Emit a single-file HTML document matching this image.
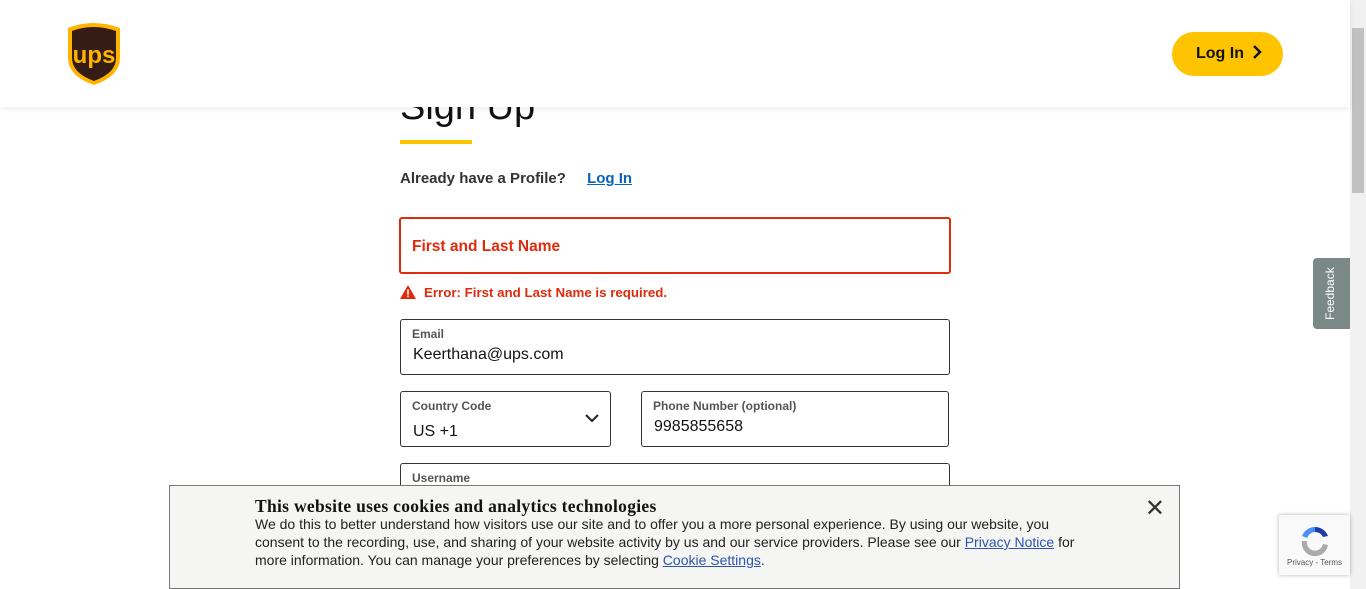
<!DOCTYPE html>
<html><head><meta charset="utf-8"><style>
*{box-sizing:border-box;margin:0;padding:0}
body{width:1366px;height:589px;overflow:hidden;background:#fff;font-family:"Liberation Sans",sans-serif;position:relative}
.hdr{position:absolute;left:0;top:0;width:1350px;height:107px;background:#fff;box-shadow:0 2px 6px rgba(0,0,0,.08);z-index:5}
.sb{position:absolute;right:0;top:0;width:16px;height:589px;background:#f1f1f1}
.thumb{position:absolute;right:2px;top:28px;width:12px;height:165px;background:#c1c1c1}
.login{position:absolute;left:1172px;top:32px;width:111px;height:44px;border-radius:22px;background:#ffc400;font-weight:bold;font-size:16px;color:#121212;line-height:44px;padding-left:24px}
.t{position:absolute;left:400px;top:86px;font-size:38px;color:#121212}
.ul{position:absolute;left:400px;top:140px;width:72px;height:4px;background:#ffc400}
.ah{position:absolute;left:400px;top:170px;font-size:15px;font-weight:bold;color:#333}
.ah a{color:#0662bb;margin-left:17px;text-decoration:underline}
.f{position:absolute;border:1px solid #333;border-radius:3px;background:#fff}
.lab{position:absolute;left:11px;top:7px;font-size:12px;color:#555;font-weight:bold}
.val{position:absolute;left:12px;top:26px;font-size:16px;color:#121212}
.err{position:absolute;left:400px;top:285px;font-size:13.3px;font-weight:bold;color:#df2a0d}
.cb{position:absolute;left:169px;top:485px;width:1011px;height:104px;background:#f5f5f3;border:1px solid #777;z-index:6}
.cb h3{position:absolute;left:85px;top:10px;font-family:"Liberation Serif",serif;font-size:17.5px;letter-spacing:.3px;color:#121212}
.cb p{position:absolute;left:85px;top:29px;width:820px;font-size:14px;line-height:18px;color:#222}
.cb a{color:#2b55b0;text-decoration:underline}
.x{position:absolute;right:14px;top:8px;font-size:24px;color:#333}
.fb{position:absolute;left:1313px;top:258px;width:37px;height:71px;background:#7b8986;border-radius:4px 0 0 4px;z-index:3}
.fb span{position:absolute;left:10px;top:62px;transform:rotate(-90deg);transform-origin:0 0;color:#fff;font-size:12px}
.rc{position:absolute;left:1279px;top:515px;width:71px;height:60px;background:#f9f9f9;box-shadow:0 0 4px rgba(0,0,0,.3);z-index:7;font-size:8px;color:#555;text-align:center}
</style></head><body>
<div class="t">Sign Up</div>
<div class="ul"></div>
<div class="ah">Already have a Profile? <a>Log In</a></div>
<div class="f" style="left:399px;top:217px;width:552px;height:57px;border:2px solid #df2a0d"><div style="position:absolute;left:11px;top:19px;font-size:15.5px;font-weight:bold;color:#df2a0d">First and Last Name</div></div>
<div class="err"><svg width="16" height="14" viewBox="0 0 16 14" style="vertical-align:-2px;margin-right:8px"><path d="M8 0L16 14H0Z" fill="#df2a0d"/><rect x="7.2" y="4.5" width="1.6" height="5" fill="#fff"/><rect x="7.2" y="10.5" width="1.6" height="1.6" fill="#fff"/></svg>Error: First and Last Name is required.</div>
<div class="f" style="left:400px;top:319px;width:550px;height:56px"><div class="lab">Email</div><div class="val">Keerthana@ups.com</div></div>
<div class="f" style="left:400px;top:391px;width:211px;height:56px"><div class="lab">Country Code</div><div class="val" style="top:31px">US +1</div><svg style="position:absolute;right:11px;top:22px" width="14" height="9" viewBox="0 0 14 9"><path d="M1 1l6 6 6-6" stroke="#222" stroke-width="2" fill="none"/></svg></div>
<div class="f" style="left:641px;top:391px;width:308px;height:56px"><div class="lab">Phone Number (optional)</div><div class="val">9985855658</div></div>
<div class="f" style="left:400px;top:463px;width:550px;height:56px"><div class="lab">Username</div></div>
<div class="hdr">
<svg style="position:absolute;left:66px;top:22px" width="56" height="64" viewBox="0 0 56 64"><path d="M2 6Q27-4 54 6V36Q54 54 28 63Q2 54 2 36Z" fill="#ffb500"/><path d="M6 9Q27 1 50 9V36Q50 51 28 59Q6 51 6 36Z" fill="#351c15"/><text x="28" y="41" text-anchor="middle" font-family="Liberation Sans" font-weight="bold" font-size="24" fill="#ffb500">ups</text></svg>
<div class="login">Log In <svg width="10" height="14" viewBox="0 0 10 14" style="margin-left:4px;vertical-align:-1px"><path d="M2 1l6 6-6 6" stroke="#121212" stroke-width="2.5" fill="none"/></svg></div>
</div>
<div class="sb"><div class="thumb"></div></div>
<div class="fb"><span>Feedback</span></div>
<div class="cb"><h3>This website uses cookies and analytics technologies</h3><p>We do this to better understand how visitors use our site and to offer you a more personal experience. By using our website, you consent to the recording, use, and sharing of your website activity by us and our service providers. Please see our <a>Privacy Notice</a> for more information. You can manage your preferences by selecting <a>Cookie Settings</a>.</p><div class="x">✕</div></div>
<div class="rc"><svg width="36" height="36" viewBox="0 0 36 36" style="margin-top:8px"><path d="M18 4a14 14 0 0 1 13 9l-5 1a9 9 0 0 0-8-5z" fill="#1c3aa9"/><path d="M18 4a14 14 0 0 0-13 9l5 2a9 9 0 0 1 8-6z" fill="#4a90f0"/><path d="M5 18a13 13 0 0 0 26 4l-5-1a8 8 0 0 1-16-3z" fill="#aaa"/></svg><div style="margin-top:-3px">Privacy - Terms</div></div>
</body></html>
